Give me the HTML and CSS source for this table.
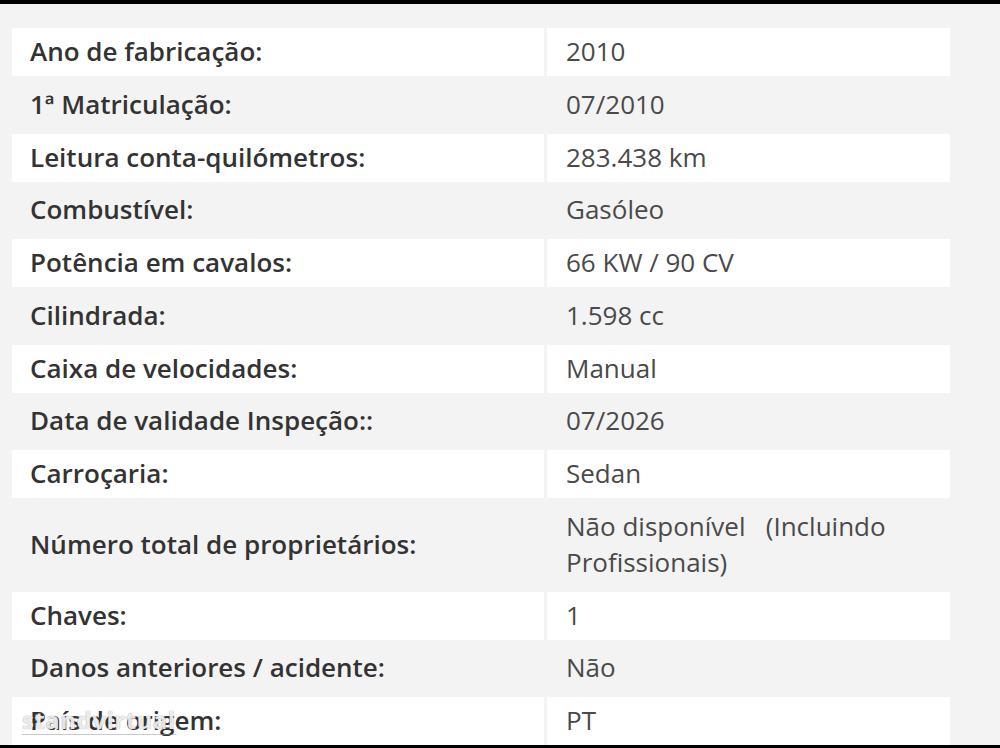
FILE: index.html
```html
<!DOCTYPE html>
<html lang="pt">
<head>
<meta charset="utf-8">
<title>Detalhes</title>
<link rel="stylesheet" href="styles.css">
</head>
<body>
<div class="screen">
  <div class="specs">
    <div class="row alt"><div class="label">Ano de fabricação:</div><div class="value">2010</div></div>
    <div class="row"><div class="label">1ª Matriculação:</div><div class="value">07/2010</div></div>
    <div class="row alt"><div class="label">Leitura conta-quilómetros:</div><div class="value">283.438 km</div></div>
    <div class="row"><div class="label">Combustível:</div><div class="value">Gasóleo</div></div>
    <div class="row alt"><div class="label">Potência em cavalos:</div><div class="value">66 KW / 90 CV</div></div>
    <div class="row"><div class="label">Cilindrada:</div><div class="value">1.598 cc</div></div>
    <div class="row alt"><div class="label">Caixa de velocidades:</div><div class="value">Manual</div></div>
    <div class="row"><div class="label">Data de validade Inspeção::</div><div class="value">07/2026</div></div>
    <div class="row alt"><div class="label">Carroçaria:</div><div class="value">Sedan</div></div>
    <div class="row"><div class="label">Número total de proprietários:</div><div class="value">Não disponível &nbsp; (Incluindo Profissionais)</div></div>
    <div class="row alt"><div class="label">Chaves:</div><div class="value">1</div></div>
    <div class="row"><div class="label">Danos anteriores / acidente:</div><div class="value">Não</div></div>
    <div class="row alt"><div class="label">País de origem:<span class="watermark">standvirtual</span></div><div class="value">PT</div></div>
  </div>
</div>
</body>
</html>
```

FILE: styles.css
```css
html, body {
  margin: 0;
  padding: 0;
}

body {
  background: #f3f3f3;
  font-family: "Open Sans", "Liberation Sans", sans-serif;
}

.screen {
  box-sizing: border-box;
  width: 1000px;
  height: 748px;
  overflow: hidden;
  border-top: 4px solid #000;
  border-bottom: 3px solid #000;
  background: #f3f3f3;
  padding: 24px 0 0 12px;
}

.specs {
  width: 938px;
  display: flex;
  flex-direction: column;
  gap: 4.75px;
}

.row {
  display: grid;
  grid-template-columns: 532px 403px;
  column-gap: 3px;
}

.row.alt .label,
.row.alt .value {
  background: #ffffff;
}

.label,
.value {
  font-size: 26px;
  line-height: 36px;
  padding: 5px 18px 7px;
  display: flex;
  align-items: center;
}

.label {
  position: relative;
  font-weight: 600;
  color: #333333;
}

.value {
  display: block;
  font-weight: 400;
  color: #4a4a4a;
  padding-left: 19px;
  padding-right: 30px;
}

.watermark {
  position: absolute;
  left: 10px;
  top: 9px;
  font-size: 24px;
  line-height: 28px;
  font-weight: 700;
  color: rgba(255, 255, 255, 0.85);
  letter-spacing: 0.5px;
  text-shadow: 0 0 1px rgba(80, 80, 80, 0.7);
  border-bottom: 1px solid rgba(150, 150, 150, 0.5);
}
```
